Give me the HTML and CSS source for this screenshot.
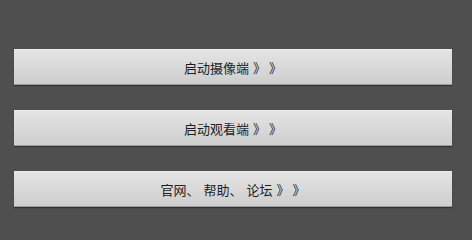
FILE: index.html
```html
<!DOCTYPE html>
<html lang="zh">
<head>
<meta charset="utf-8">
<link rel="stylesheet" href="styles.css">
</head>
<body>
<div class="menu">
  <div class="btn">启动摄像端<span class="arr">》</span><span class="arr2">》</span></div>
  <div class="btn">启动观看端<span class="arr">》</span><span class="arr2">》</span></div>
  <div class="btn">官网、<span class="sep"></span>帮助、<span class="sep"></span>论坛<span class="arr">》</span><span class="arr2">》</span></div>
</div>
</body>
</html>
```
FILE: styles.css
```css
html, body {
  margin: 0;
  padding: 0;
  background: #4f4f4f;
  width: 472px;
  height: 222px;
  overflow: hidden;
}
.menu {
  display: flex;
  flex-direction: column;
  gap: 25px;
  padding: 49px 20px 0 14px;
}
.btn {
  height: 36px;
  box-sizing: border-box;
  display: flex;
  align-items: center;
  justify-content: center;
  background: linear-gradient(#e4e4e4, #cecece);
  border-top: 1px solid #ececec;
  border-bottom: 1px solid #9c9c9c;
  box-shadow: 0 1px 1px rgba(0,0,0,0.35);
  font-family: "Noto Sans CJK SC", sans-serif;
  font-size: 13px;
  color: #1e1e1e;
  white-space: pre;
}
.arr {
  margin-left: 4px;
}
.arr2 {
  margin-left: 3px;
}
.sep {
  display: inline-block;
  width: 4px;
}
```
